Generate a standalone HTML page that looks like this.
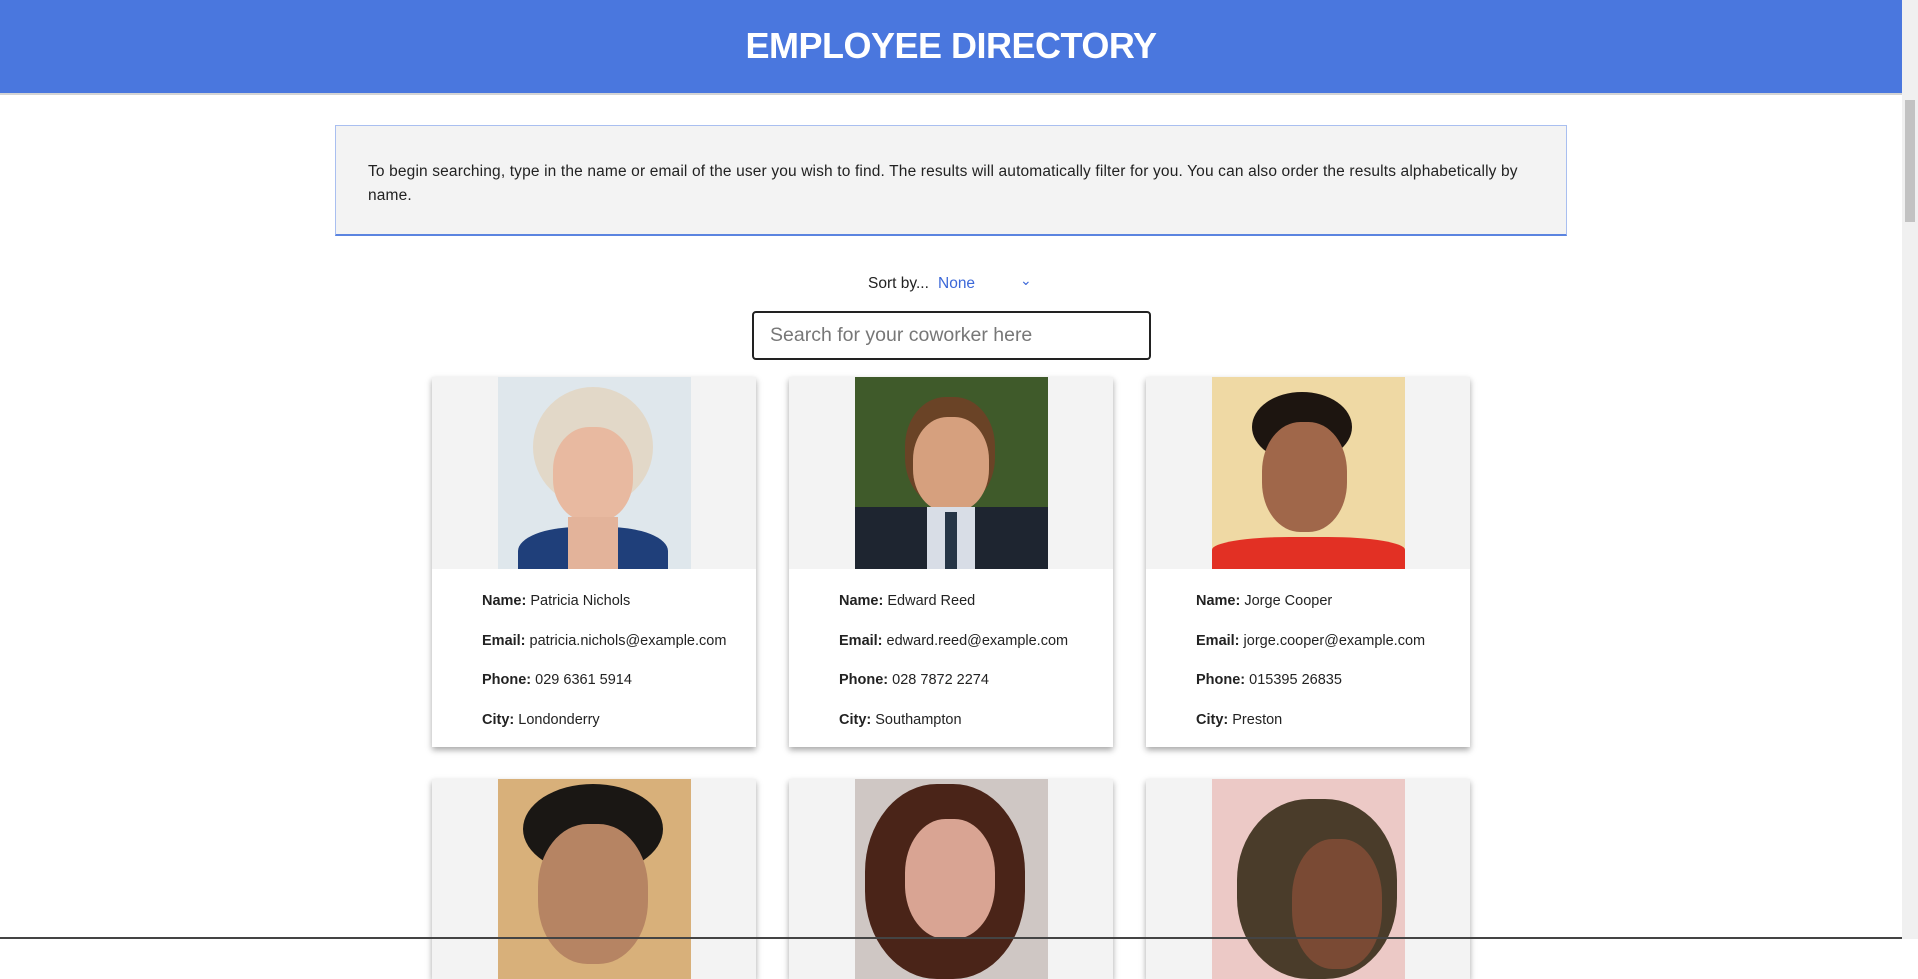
<!DOCTYPE html>
<html><head><meta charset="utf-8"><style>
html,body{margin:0;padding:0;width:1918px;height:939px;overflow:hidden;background:#fff;font-family:"Segoe UI","Liberation Sans",sans-serif;color:#222;}
.hdr{position:absolute;left:0;top:0;width:1902px;height:93px;background:#4a77de;border-bottom:2px solid #d4d4d4;}
.hdr h1{margin:0;text-align:center;color:#fff;font-size:36px;font-weight:bold;line-height:92px;letter-spacing:-0.5px;}
.info{position:absolute;left:335px;top:125px;width:1232px;height:111px;background:#f3f3f3;border:1px solid #a9bff0;border-bottom:2px solid #5b84e0;box-sizing:border-box;}
.info p{margin:0;position:absolute;left:32px;top:34px;width:1170px;font-size:15.5px;line-height:24px;letter-spacing:0.15px}
.sort{position:absolute;top:275px;left:868px;font-size:15.5px;}
.sort .n{position:absolute;left:70px;top:0;color:#3c68d8;white-space:nowrap}
.sort .c{position:absolute;left:152px;top:-3px;color:#3c68d8;font-size:14px}
.search{position:absolute;left:752px;top:311px;width:399px;height:49px;border:2px solid #222;border-radius:4px;box-sizing:border-box;font-size:19.5px;color:#777;padding-left:16px;line-height:45px;}
.card{position:absolute;width:324px;background:#fff;box-shadow:0 3px 6px rgba(0,0,0,.35);}
.top{height:192px;background:#f3f3f3;position:relative;overflow:hidden}
.ph{position:absolute;left:66px;top:0;width:193px;height:192px;overflow:hidden}
.txt{padding:24px 0 0 50px;font-size:14.5px;height:154px;}
.txt div{height:39.7px}
b{font-weight:bold}
.sb{position:absolute;right:0;top:0;width:16px;height:939px;background:#f0f0f0}
.sb .t{position:absolute;left:3px;top:100px;width:10px;height:122px;background:#c2c2c2}
.bot{position:absolute;left:0;top:937px;width:1902px;height:2px;background:#444}
</style></head><body>
<div class="hdr"><h1>EMPLOYEE DIRECTORY</h1></div>
<div class="info"><p>To begin searching, type in the name or email of the user you wish to find. The results will automatically filter for you. You can also order the results alphabetically by name.</p></div>
<div class="sort">Sort by...<span class="n">None</span><span class="c">&#8964;</span></div>
<div class="search">Search for your coworker here</div>

<div class="card" style="left:432px;top:377px">
<div class="top"><div class="ph" style="background:#dfe7ec">
<div style="position:absolute;left:35px;top:10px;width:120px;height:120px;border-radius:50%;background:#e2d8c8"></div>
<div style="position:absolute;left:55px;top:50px;width:80px;height:95px;border-radius:45%;background:#e8b9a0"></div>
<div style="position:absolute;left:20px;top:150px;width:150px;height:60px;border-radius:40% 40% 0 0;background:#1f3f7a"></div>
<div style="position:absolute;left:70px;top:140px;width:50px;height:52px;background:#e3b39a"></div>
</div></div>
<div class="txt"><div><b>Name:</b> Patricia Nichols</div><div><b>Email:</b> patricia.nichols@example.com</div><div><b>Phone:</b> 029 6361 5914</div><div><b>City:</b> Londonderry</div></div></div>

<div class="card" style="left:789px;top:377px">
<div class="top"><div class="ph" style="background:#3f5a2a">
<div style="position:absolute;left:50px;top:20px;width:90px;height:110px;border-radius:45%;background:#6a4326"></div>
<div style="position:absolute;left:58px;top:40px;width:76px;height:95px;border-radius:45%;background:#d6a07e"></div>
<div style="position:absolute;left:0;top:130px;width:193px;height:62px;background:#1e2530"></div>
<div style="position:absolute;left:72px;top:130px;width:48px;height:62px;background:#d8dde6"></div>
<div style="position:absolute;left:90px;top:135px;width:12px;height:57px;background:#263546"></div>
</div></div>
<div class="txt"><div><b>Name:</b> Edward Reed</div><div><b>Email:</b> edward.reed@example.com</div><div><b>Phone:</b> 028 7872 2274</div><div><b>City:</b> Southampton</div></div></div>

<div class="card" style="left:1146px;top:377px">
<div class="top"><div class="ph" style="background:#efd9a4">
<div style="position:absolute;left:40px;top:15px;width:100px;height:70px;border-radius:50%;background:#1d1510"></div>
<div style="position:absolute;left:50px;top:45px;width:85px;height:110px;border-radius:45%;background:#a0674a"></div>
<div style="position:absolute;left:0;top:160px;width:193px;height:32px;border-radius:40% 40% 0 0;background:#e23024"></div>
</div></div>
<div class="txt"><div><b>Name:</b> Jorge Cooper</div><div><b>Email:</b> jorge.cooper@example.com</div><div><b>Phone:</b> 015395 26835</div><div><b>City:</b> Preston</div></div></div>

<div class="card" style="left:432px;top:779px">
<div class="top" style="height:200px"><div class="ph" style="background:#d8b07a;height:200px">
<div style="position:absolute;left:25px;top:5px;width:140px;height:90px;border-radius:50%;background:#1a1714"></div>
<div style="position:absolute;left:40px;top:45px;width:110px;height:140px;border-radius:45%;background:#b68463"></div>
</div></div></div>

<div class="card" style="left:789px;top:779px">
<div class="top" style="height:200px"><div class="ph" style="background:#cfc7c4;height:200px">
<div style="position:absolute;left:10px;top:5px;width:160px;height:195px;border-radius:45%;background:#4a2418"></div>
<div style="position:absolute;left:50px;top:40px;width:90px;height:120px;border-radius:45%;background:#d9a493"></div>
</div></div></div>

<div class="card" style="left:1146px;top:779px">
<div class="top" style="height:200px"><div class="ph" style="background:#ecc9c6;height:200px">
<div style="position:absolute;left:25px;top:20px;width:160px;height:180px;border-radius:45%;background:#4a3c2a"></div>
<div style="position:absolute;left:80px;top:60px;width:90px;height:130px;border-radius:45%;background:#7a4a34"></div>
</div></div></div>

<div class="sb"><div class="t"></div></div>
<div class="bot"></div>
</body></html>
